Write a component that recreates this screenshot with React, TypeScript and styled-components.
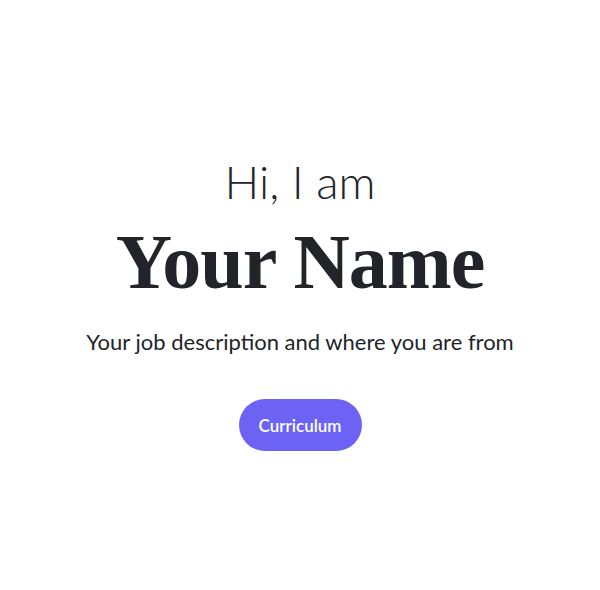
import styled, { createGlobalStyle } from "styled-components";

const GlobalStyle = createGlobalStyle`
  html, body {
    margin: 0;
    padding: 0;
    background: #ffffff;
  }
  body {
    font-family: Lato, "Noto Sans", sans-serif;
    color: #212529;
  }
`;

const Hero = styled.section`
  height: 590px;
  display: flex;
  flex-direction: column;
  align-items: center;
  text-align: center;
  padding-top: 154px;
  box-sizing: border-box;
`;

const Greeting = styled.h2`
  margin: 0;
  font-family: Lato, "Noto Sans", sans-serif;
  font-weight: 300;
  font-size: 46px;
  line-height: 55px;
`;

const Name = styled.h1`
  margin: 10px 0 0;
  font-family: "Liberation Serif", "DejaVu Serif", serif;
  font-weight: 700;
  font-size: 78px;
  letter-spacing: -1px;
  line-height: 86px;
`;

const Description = styled.p`
  margin: 20px 0 0;
  font-family: Lato, "Noto Sans", sans-serif;
  font-size: 22px;
  line-height: 33px;
`;

const Button = styled.a`
  margin-top: 41px;
  display: inline-flex;
  align-items: center;
  justify-content: center;
  width: 123px;
  height: 52px;
  border-radius: 26px;
  background: #6c63f5;
  color: #ffffff;
  font-family: Lato, "Noto Sans", sans-serif;
  font-weight: 600;
  font-size: 17px;
  text-decoration: none;
  cursor: pointer;
`;

export default function App() {
  return (
    <>
      <GlobalStyle />
      <Hero>
        <Greeting>Hi, I am</Greeting>
        <Name>Your Name</Name>
        <Description>Your job description and where you are from</Description>
        <Button href="#">Curriculum</Button>
      </Hero>
    </>
  );
}
